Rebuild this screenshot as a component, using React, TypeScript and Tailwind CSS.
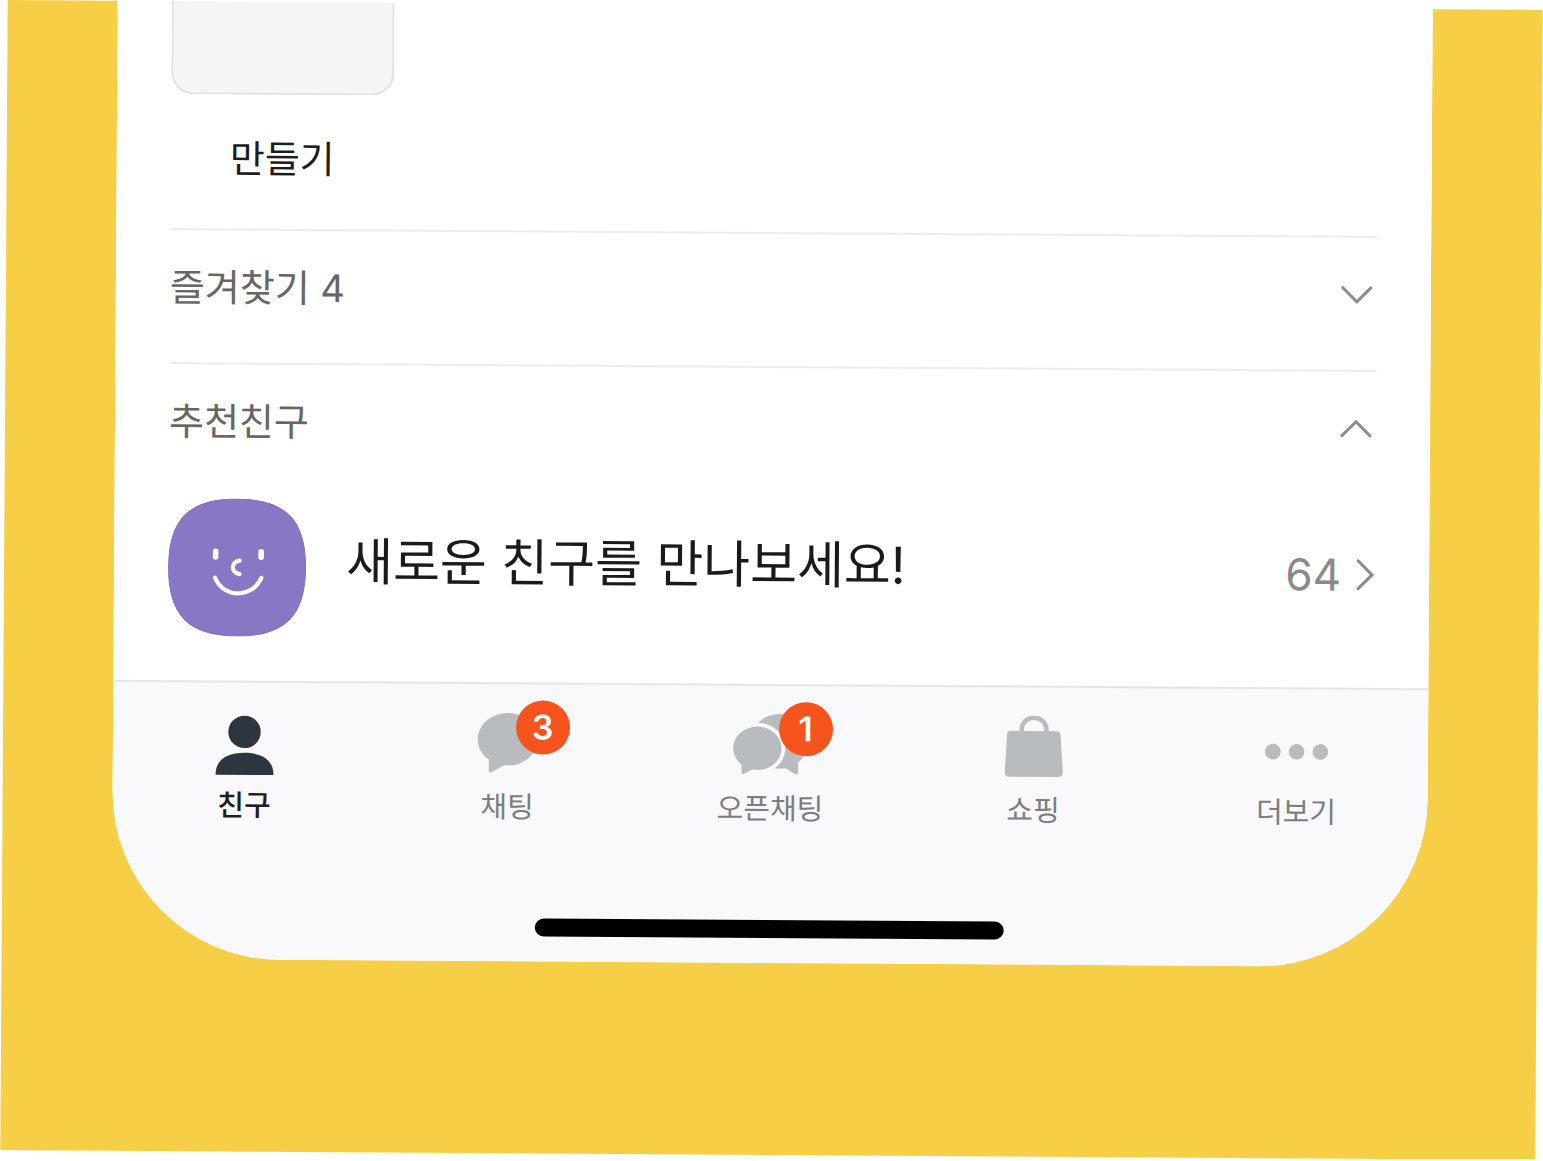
import { useState } from "react";
import type { ReactNode } from "react";

const PersonIcon = () => (
  <svg viewBox="0 0 80 64" className="h-16 w-20 overflow-visible" fill="currentColor" aria-hidden="true">
    <circle cx="39.5" cy="21.3" r="16.2" />
    <path d="M10.8 64.3 C10.8 50.5 20.5 42.2 39.8 42.2 C59 42.2 68.8 50.5 68.8 64.3 Z" />
  </svg>
);

const ChatIcon = () => (
  <svg viewBox="0 0 80 64" className="h-16 w-20" fill="currentColor" aria-hidden="true">
    <ellipse cx="39.7" cy="27" rx="30" ry="26.3" />
    <path d="M21 44 V58 Q21 61.4 24.4 59.8 L37 52.6 Z" />
  </svg>
);

const OpenChatIcon = () => (
  <svg viewBox="0 0 80 64" className="h-16 w-20" aria-hidden="true">
    <g fill="currentColor">
      <ellipse cx="48.5" cy="27.4" rx="29" ry="27.4" />
      <path d="M67.3 44 V58 Q67.3 61.4 63.8 59.8 L54 53.6 Z" />
    </g>
    <ellipse cx="26.5" cy="34.4" rx="28" ry="25.6" fill="#f9f9fc" />
    <path d="M0 44 H30 L44 54.6 V64 H0 Z" fill="#f9f9fc" />
    <g fill="currentColor">
      <ellipse cx="26.5" cy="34.4" rx="24.2" ry="21.7" />
      <path d="M10.7 47 V58 Q10.7 61.2 13.8 59.8 L23 54.6 Z" />
    </g>
  </svg>
);

const BagIcon = () => (
  <svg viewBox="0 0 80 64" className="h-16 w-20" fill="currentColor" aria-hidden="true">
    <path d="M17 15.3 H62.5 Q66.2 15.3 66.5 19 L69 56.5 Q69.2 61.2 64.5 61.2 H15.5 Q10.8 61.2 11 56.5 L13 19 Q13.3 15.3 17 15.3 Z" />
    <path d="M27.6 17 V14.5 C27.6 -2 52.4 -2 52.4 14.5 V17" fill="none" stroke="currentColor" strokeWidth="4.6" />
  </svg>
);

const MoreIcon = () => (
  <svg viewBox="0 0 80 64" className="h-16 w-20" fill="currentColor" aria-hidden="true">
    <circle cx="16" cy="34.4" r="7.8" />
    <circle cx="39.7" cy="34.4" r="7.8" />
    <circle cx="63.4" cy="34.4" r="7.8" />
  </svg>
);

const FaceAvatar = () => (
  <svg viewBox="0 0 138 138" className="size-[138px] shrink-0" aria-hidden="true">
    <path
      d="M69 0.5 C117 0.5 137.5 21 137.5 69 C137.5 117 117 137.5 69 137.5 C21 137.5 0.5 117 0.5 69 C0.5 21 21 0.5 69 0.5 Z"
      fill="#8977c5"
      stroke="#7f70b8"
    />
    <g fill="none" stroke="#fff" strokeLinecap="round">
      <path d="M47.5 53 V58.5 M93 53 V58.5" strokeWidth="5.6" />
      <path d="M71.5 62 C62.5 63.5 62.5 74 71.5 75.5" strokeWidth="4.2" />
      <path d="M47 79.3 C56 100 84 100 93.3 79.3" strokeWidth="4.2" />
    </g>
  </svg>
);

const TABS: { label: string; icon: ReactNode; badge?: number }[] = [
  { label: "친구", icon: <PersonIcon /> },
  { label: "채팅", icon: <ChatIcon />, badge: 3 },
  { label: "오픈채팅", icon: <OpenChatIcon />, badge: 1 },
  { label: "쇼핑", icon: <BagIcon /> },
  { label: "더보기", icon: <MoreIcon /> },
];

const SectionHeader = ({ title, open, onToggle }: { title: string; open: boolean; onToggle: () => void }) => (
  <button
    type="button"
    aria-expanded={open}
    onClick={onToggle}
    className="flex h-[116px] w-full items-center justify-between border-t-2 border-[#ededed] pr-1 text-[38px] leading-none text-[#666]"
  >
    <span>{title}</span>
    <svg
      viewBox="0 0 32 18"
      className="h-[18px] w-8"
      fill="none"
      stroke="#8c8c8c"
      strokeWidth="3"
      strokeLinecap="round"
      aria-hidden="true"
    >
      <path d={open ? "M2 16 L16 2 L30 16" : "M2 2 L16 16 L30 2"} />
    </svg>
  </button>
);

export default function App() {
  const [active, setActive] = useState("친구");
  const [favoritesOpen, setFavoritesOpen] = useState(false);
  const [suggestedOpen, setSuggestedOpen] = useState(true);

  return (
    <div className="overflow-hidden bg-white px-1 pt-[5px] pb-1 font-[Inter,'Noto_Sans_CJK_KR',sans-serif]">
      <div className="rotate-[0.37deg] bg-[#f7cf46] px-[110px] pb-48">
        <main className="overflow-hidden rounded-b-[168px] bg-white shadow-[0_-2px_0_#fff]">
          <div className="px-[54px]">
            <section className="h-[227px]">
              <button type="button" className="flex w-[223px] flex-col items-center gap-10 text-[38px] text-[#1c1c1c]">
                <span className="h-[93px] w-full rounded-b-[22px] border-2 border-t-0 border-[#e2e2e2] bg-[#f5f5f5]" />
                <span className="leading-[48px]">만들기</span>
              </button>
            </section>

            <div className="h-[134px]">
              <SectionHeader title="즐겨찾기 4" open={favoritesOpen} onToggle={() => setFavoritesOpen(!favoritesOpen)} />
            </div>
            <SectionHeader title="추천친구" open={suggestedOpen} onToggle={() => setSuggestedOpen(!suggestedOpen)} />

            <a href="#new-friends" className="mt-5 mb-11 flex items-center gap-10">
              <FaceAvatar />
              <span className="flex-1 pb-3 text-[51px] leading-[60px] text-[#1a1a1a]">새로운 친구를 만나보세요!</span>
              <span className="flex items-center gap-[14px] text-[44px] leading-none text-[#8a8a8a]">
                64
                <svg
                  viewBox="0 0 20 34"
                  className="h-[34px] w-5"
                  fill="none"
                  stroke="currentColor"
                  strokeWidth="3"
                  strokeLinecap="round"
                  aria-hidden="true"
                >
                  <path d="M3 3 L17 17 L3 31" />
                </svg>
              </span>
            </a>
          </div>

          <footer className="border-t-2 border-[#e6e6ea] bg-[#f9f9fc] pb-[25px]">
            <nav className="grid grid-cols-5 pt-7">
              {TABS.map((tab) => (
                <button
                  key={tab.label}
                  type="button"
                  onClick={() => setActive(tab.label)}
                  className={
                    active === tab.label
                      ? "flex flex-col items-center text-[#2d353f]"
                      : "flex flex-col items-center text-[#b8bcbf]"
                  }
                >
                  <span className="relative">
                    {tab.icon}
                    {tab.badge && (
                      <span className="absolute -top-3 left-12 flex size-[54px] items-center justify-center rounded-full bg-[#f7531c] text-[34px] leading-none font-semibold text-white">
                        {tab.badge}
                      </span>
                    )}
                  </span>
                  <span
                    className={
                      active === tab.label
                        ? "mt-[11px] text-[29px] leading-10 font-medium text-[#1f1f1f]"
                        : "mt-[11px] text-[29px] leading-10 text-[#7b7d80]"
                    }
                  >
                    {tab.label}
                  </span>
                </button>
              ))}
            </nav>
            <div className="mx-auto mt-[91px] h-[18px] w-[469px] rounded-full bg-black" />
          </footer>
        </main>
      </div>
    </div>
  );
}
